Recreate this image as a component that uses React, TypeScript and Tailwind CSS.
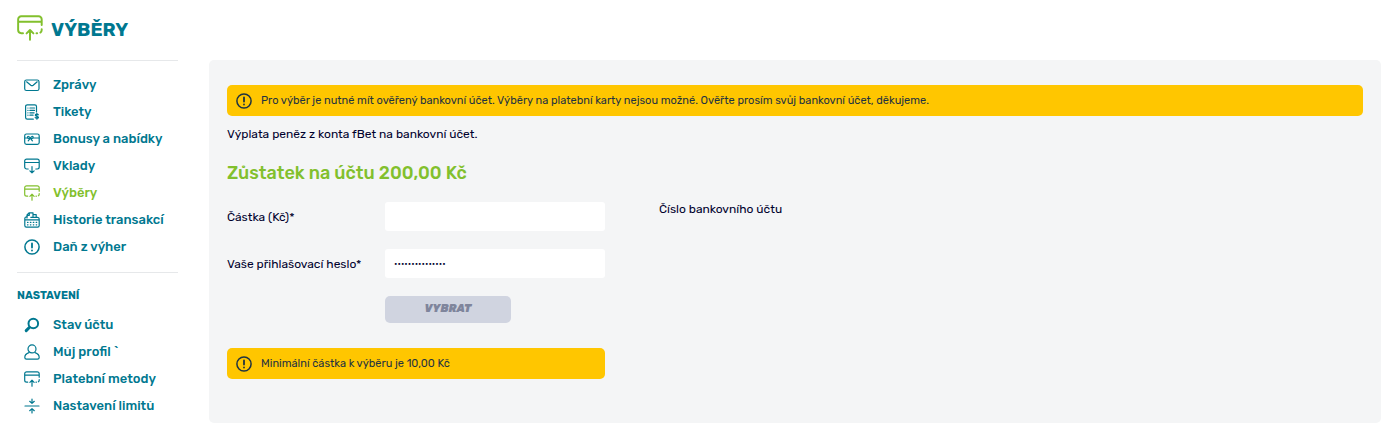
import type { ReactNode } from 'react';

type IconProps = { className?: string };

function Svg({ className = 'size-4', children }: IconProps & { children: ReactNode }) {
  return (
    <svg
      viewBox="0 0 16 16"
      className={className}
      fill="none"
      stroke="currentColor"
      strokeWidth="1.2"
      strokeLinecap="round"
      strokeLinejoin="round"
      aria-hidden="true"
    >
      {children}
    </svg>
  );
}

const MailIcon = () => (
  <Svg>
    <rect x=".7" y="3" width="14.300" height="10.500" rx="1.800" />
    <path d="M2.600 4.800 6.800 8.200c.8.600 1.600.6 2.400 0l4-3.400" />
  </Svg>
);

const TicketIcon = () => (
  <Svg>
    <path d="M12.500 8V2.500A1.700 1.700 0 0 0 10.800.8H3.300a1.700 1.700 0 0 0-1.700 1.700v11a1.700 1.700 0 0 0 1.700 1.700h6" />
    <path d="M3.900 4h.1M5.900 4h4.600M3.900 6.400h.1M5.900 6.400h4.600M3.900 8.800h.1M5.900 8.800h4.200M3.900 11.200h.1M5.900 11.200h3.200" />
    <path d="M14.300 10.800c-.4-1-3-1-3 .4s3.200.8 3.200 2.100-2.800 1.300-3.300.2M12.900 9.300v5.900" />
  </Svg>
);

const BonusIcon = () => (
  <Svg>
    <rect x=".7" y="3" width="14.500" height="10.300" rx="1.800" />
    <path d="M1 7h2.500M8.800 7H15" />
    <path d="M6.300 7.200C5 5 3.400 5.100 3.500 6.300s1.500 1.500 2.800.9c1.300.6 2.800.4 2.900-.9s-1.600-1.300-2.900.9ZM6.300 7.200 4.200 9.900M6.300 7.200l2.100 2.700" />
  </Svg>
);

const DepositIcon = () => (
  <Svg>
    <path d="M4.200 11H2.600A1.900 1.900 0 0 1 .7 9.100V3a1.900 1.900 0 0 1 1.900-1.900h10.700A1.900 1.900 0 0 1 15.200 3v6.100a1.900 1.900 0 0 1-1.900 1.900h-1.500M.7 4.500h14.500" />
    <path d="M8 8.500v6.300M5.900 12.800 8 14.900l2.100-2.100" />
  </Svg>
);

const WithdrawIcon = ({ className }: IconProps) => (
  <Svg className={className}>
    <path d="M3.700 11.200H2.600A1.900 1.900 0 0 1 .7 9.300V2.700A1.900 1.900 0 0 1 2.600.8h10.700a1.900 1.900 0 0 1 1.900 1.900v3.500M.7 4.200h14.500M15.200 8.700v.6c0 .6-.3 1.200-.8 1.500M12 11.200h.4" />
    <path d="M8 15.200V9.300M5.900 11.300 8 9.200l2.100 2.100" />
  </Svg>
);

const HistoryIcon = () => (
  <Svg>
    <path d="M3 6V2.900L5 .8h4v4M5.300 1.100v2.200H3.300M9.200 2.600h3v2.700" />
    <path d="M3 4.800h-.6A1.700 1.700 0 0 0 .8 6.500v7a1.700 1.700 0 0 0 1.600 1.700h11.200a1.700 1.700 0 0 0 1.600-1.700V7a1.700 1.700 0 0 0-1.600-1.700H6.800M1 7.900h14" />
    <path d="M3.500 10.400h.5M6.400 10.400h.5M9.300 10.400h.5M12.200 10.400h.5M3.500 12.800h.5M6.400 12.800h.5M9.300 12.800h.5M12.200 12.800h.5" />
  </Svg>
);

const AlertIcon = ({ className }: IconProps) => (
  <Svg className={className}>
    <circle cx="8" cy="8" r="7.100" strokeWidth="1.500" />
    <path d="M8 4.500v4.100M8 11.300v.2" strokeWidth="1.800" />
  </Svg>
);

const SearchIcon = () => (
  <Svg>
    <circle cx="9.300" cy="6.500" r="4.800" strokeWidth="2" />
    <path d="M5.300 10.500 2.200 13.600" strokeWidth="3" />
  </Svg>
);

const UserIcon = () => (
  <Svg>
    <circle cx="8" cy="4.900" r="4" />
    <path d="M5 8.600c-2.600.8-4.200 2.600-4.200 4.900 0 1 .7 1.600 1.700 1.600h11c1 0 1.700-.6 1.700-1.600 0-2.300-1.600-4.100-4.200-4.900" />
  </Svg>
);

const LimitIcon = () => (
  <Svg>
    <path d="M1 8h14M8 1v4.300M5.700 3.300 8 5.400l2.300-2.100M8 15v-4.300M5.700 12.700 8 10.600l2.300 2.100" />
  </Svg>
);

type Item = { label: string; icon: ReactNode; active?: boolean };

const accountItems: Item[] = [
  { label: 'Zprávy', icon: <MailIcon /> },
  { label: 'Tikety', icon: <TicketIcon /> },
  { label: 'Bonusy a nabídky', icon: <BonusIcon /> },
  { label: 'Vklady', icon: <DepositIcon /> },
  { label: 'Výběry', icon: <WithdrawIcon />, active: true },
  { label: 'Historie transakcí', icon: <HistoryIcon /> },
  { label: 'Daň z výher', icon: <AlertIcon /> },
];

const settingsItems: Item[] = [
  { label: 'Stav účtu', icon: <SearchIcon /> },
  { label: 'Můj profil `', icon: <UserIcon /> },
  { label: 'Platební metody', icon: <WithdrawIcon /> },
  { label: 'Nastavení limitů', icon: <LimitIcon /> },
];

function Menu({ items }: { items: Item[] }) {
  return (
    <ul>
      {items.map((item) => (
        <li key={item.label}>
          <a
            href="#"
            aria-current={item.active ? 'page' : undefined}
            className={`flex h-[27px] items-center gap-[13px] pl-[7px] text-[13px] font-medium whitespace-nowrap ${
              item.active ? 'text-[#82c02d]' : 'text-[#007890]'
            }`}
          >
            {item.icon}
            {item.label}
          </a>
        </li>
      ))}
    </ul>
  );
}

function Notice({ children }: { children: ReactNode }) {
  return (
    <div className="flex min-h-[31px] items-center gap-[9px] rounded-[5px] bg-[#ffc600] px-[9px] text-[11px] leading-4 text-[#1f3340]">
      <AlertIcon className="size-4 shrink-0" />
      <p>{children}</p>
    </div>
  );
}

export default function App() {
  return (
    <div className="bg-white pr-2 pl-[17px] font-['Rubik','Inter',sans-serif] text-[#00002d]">
      <header className="flex h-[60px] items-center gap-2 text-[#82c02d]">
        <WithdrawIcon className="mb-1 size-[26px]" />
        <h1 className="text-[19px] font-bold text-[#007890]">VÝBĚRY</h1>
      </header>
      <div className="flex items-start gap-[31px]">
        <nav className="w-[161px] shrink-0 border-t border-[#e6e8ea] pt-[10px]">
          <Menu items={accountItems} />
          <h2 className="mt-3 border-t border-[#e6e8ea] pt-[15px] pb-[7px] text-[11px] leading-4 font-bold text-[#007890]">
            NASTAVENÍ
          </h2>
          <Menu items={settingsItems} />
        </nav>
        <main className="min-w-0 flex-1 rounded-[5px] bg-[#f4f5f6] px-[18px] pt-[25px] pb-11 text-xs">
          <Notice>
            Pro výběr je nutné mít ověřený bankovní účet. Výběry na platební karty nejsou možné. Ověřte prosím svůj
            bankovní účet, děkujeme.
          </Notice>
          <p className="mt-[10px]">Výplata peněz z konta fBet na bankovní účet.</p>
          <h2 className="mt-[19px] text-lg leading-6 font-medium text-[#82c02d]">Zůstatek na účtu 200,00 Kč</h2>
          <div className="mt-[17px] flex items-start gap-[54px]">
            <form className="w-[378px]" onSubmit={(e) => e.preventDefault()}>
              <div className="flex items-center">
                <label htmlFor="amount" className="w-[158px]">
                  Částka (Kč)*
                </label>
                <input id="amount" type="text" className="h-[29px] min-w-0 flex-1 rounded-[3px] bg-white px-[9px]" />
              </div>
              <div className="mt-[18px] flex items-center">
                <label htmlFor="password" className="w-[158px]">
                  Vaše přihlašovací heslo*
                </label>
                <input
                  id="password"
                  type="password"
                  defaultValue="heslo1234567890"
                  className="h-[29px] min-w-0 flex-1 rounded-[3px] bg-white px-[9px] text-[9px]"
                />
              </div>
              <button
                type="submit"
                disabled
                className="mt-[18px] mb-[25px] ml-[158px] block h-[27px] w-[126px] rounded-[5px] bg-[#d0d4e0] pb-px text-[11px] leading-4 font-black text-[#7f859c] italic"
              >
                VYBRAT
              </button>
              <Notice>Minimální částka k výběru je 10,00 Kč</Notice>
            </form>
            <p className="leading-[14px]">Číslo bankovního účtu</p>
          </div>
        </main>
      </div>
    </div>
  );
}
